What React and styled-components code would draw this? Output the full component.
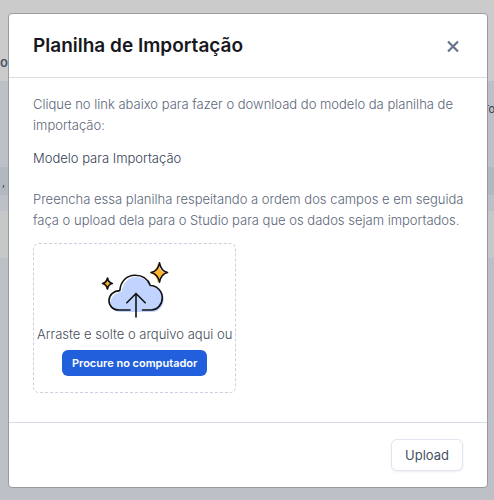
import React, { useRef } from "react";
import styled, { createGlobalStyle } from "styled-components";

const App = () => {
  const fileInput = useRef(null);

  const browseHandler = () => {
    fileInput.current.click();
  };

  return (
    <>
      <GlobalStyle />
      <Backdrop aria-hidden="true">
        <Band $height={81} $color="#cbcbcb">
          <strong>no</strong>
        </Band>
        <Band $height={86} $color="#bdc1c7" $align="flex-start" $end>
          <span>To</span>
        </Band>
        <Band $height={28} $color="#b2b8bf">
          <span>, s</span>
        </Band>
        <Band $height={16} $color="#bdc1c7" />
        <Band $height={47} $color="#c6c7c9" />
      </Backdrop>
      <Overlay>
        <Modal role="dialog" aria-labelledby="modal-title">
          <Header>
            <Title id="modal-title">Planilha de Importação</Title>
            <CloseButton type="button" aria-label="Fechar">
              <CloseIcon />
            </CloseButton>
          </Header>
          <Body>
            <Text>
              Clique no link abaixo para fazer o download do modelo da planilha
              de importação:
            </Text>
            <ModelLink href="#modelo">Modelo para Importação</ModelLink>
            <Text>
              Preencha essa planilha respeitando a ordem dos campos e em seguida
              faça o upload dela para o Studio para que os dados sejam
              importados.
            </Text>
            <DropZone>
              <CloudIcon />
              <DropLabel htmlFor="file">
                Arraste e solte o arquivo aqui ou
              </DropLabel>
              <input id="file" type="file" ref={fileInput} hidden />
              <BrowseButton type="button" onClick={browseHandler}>
                Procure no computador
              </BrowseButton>
            </DropZone>
          </Body>
          <Footer>
            <UploadButton type="button">Upload</UploadButton>
          </Footer>
        </Modal>
      </Overlay>
    </>
  );
};

const CloseIcon = () => (
  <svg width="12" height="12" viewBox="0 0 12 12" aria-hidden="true">
    <path
      d="M1 1.500 11 11.500M11 1.500 1 11.500"
      stroke="#64748b"
      strokeWidth="2.2"
      fill="none"
    />
  </svg>
);

const CloudIcon = () => (
  <svg width="68" height="60" viewBox="0 0 68 60" aria-hidden="true">
    {/* offset colour fills */}
    <path
      d="M19 52C13 52 9.500 48 9.500 42.500C9.500 37 14 32.500 20.500 32C22 23 27 17 35 17C42 17 47 21 50 27C57 27 62.800 32 62.800 39C62.800 46 58 52 51 52Z"
      fill="#c0d4ff"
    />
    <path
      d="M57 3Q58.500 11.500 65 13Q58.500 14.500 57 23Q55.500 14.500 49 13Q55.500 11.500 57 3Z"
      fill="#ffb42e"
    />
    <path
      d="M5.500 18Q6.500 23 10.500 24Q6.500 25 5.500 30Q4.500 25 1 24Q4.500 23 5.500 18Z"
      fill="#ffb42e"
    />
    <g
      fill="none"
      stroke="#111"
      strokeWidth="1.6"
      strokeLinecap="round"
      strokeLinejoin="round"
    >
      <path d="M29 50H18C12 50 8 46 8 40.500C8 35 12.500 30.800 18.800 30.600C19.500 21.500 25.500 15.200 34 15.200C41.500 15.200 47 19 49.300 25.500C56 25.800 61.300 31 61.300 37.800C61.300 44.500 56.500 50 50 50H41.500" />
      <path d="M35 57V33.500M25.800 42.800 35 33.500 44.200 42.800" />
      <path d="M58.500 2.800Q60 11 66.500 12.500Q60 14 58.500 22.200Q57 14 50 12.500Q57 11 58.500 2.800Z" />
      <path d="M6.500 18Q7.300 22.600 11.300 23.500Q7.300 24.400 6.500 29Q5.700 24.400 1.500 23.500Q5.700 22.600 6.500 18Z" />
    </g>
  </svg>
);

const GlobalStyle = createGlobalStyle`
  * {
    box-sizing: border-box;
  }
  body {
    margin: 0;
    background: #bdc1c7;
    font-family: Inter, "Liberation Sans", sans-serif;
    font-size: 13px;
    font-weight: 300;
    line-height: 21px;
  }
  button {
    font-family: inherit;
    cursor: pointer;
  }
`;

const Backdrop = styled.div`
  position: fixed;
  inset: 0;
  overflow: hidden;
  color: #475569;
`;
const Band = styled.div`
  display: flex;
  align-items: ${(props) => props.$align || "flex-end"};
  justify-content: ${(props) => (props.$end ? "flex-end" : "flex-start")};
  height: ${(props) => props.$height}px;
  background: ${(props) => props.$color};
  strong {
    margin: 0 0 8px -8px;
    font-weight: 600;
  }
  span {
    margin: ${(props) => (props.$end ? "18px -1px 0 0" : "0 0 2px 2px")};
    font-size: 11px;
    font-weight: 400;
    color: #3f3a4a;
  }
`;
const Overlay = styled.div`
  position: relative;
  padding: 13px 6px 12px 8px;
`;
const Modal = styled.div`
  width: 100%;
  background: #fff;
  border: 1px solid #999a9c;
  border-radius: 4px;
`;
const Header = styled.div`
  display: flex;
  align-items: center;
  justify-content: space-between;
  height: 64px;
  padding: 0 24px;
  border-bottom: 1px solid #dcdde0;
`;
const Title = styled.h2`
  margin: 0;
  font-size: 19px;
  line-height: 24px;
  font-weight: 600;
  color: #16181d;
`;
const CloseButton = styled.button`
  display: flex;
  padding: 4px;
  border: 0;
  background: none;
`;
const Body = styled.div`
  display: flex;
  flex-direction: column;
  align-items: flex-start;
  gap: 12px;
  padding: 16px 16px 29px 24px;
`;
const Text = styled.p`
  margin: 0;
  color: #5b6679;
`;
const ModelLink = styled.a`
  margin-bottom: 8px;
  color: #334155;
  text-decoration: none;
`;
const DropZone = styled.div`
  display: flex;
  flex-direction: column;
  align-items: center;
  padding: 16px 3px;
  border: 1px dashed #cbcfde;
  border-radius: 6px;
`;
const DropLabel = styled.label`
  margin: 4px 0 5px;
  color: #454d59;
`;
const BrowseButton = styled.button`
  height: 26px;
  padding: 0 10px;
  border: 0;
  border-radius: 6px;
  background: #225fdc;
  color: #fff;
  font-size: 11px;
  font-weight: 600;
`;
const Footer = styled.div`
  display: flex;
  justify-content: flex-end;
  padding: 16px 24px;
  border-top: 1px solid #d9dce6;
`;
const UploadButton = styled.button`
  height: 32px;
  padding: 0 13px;
  border: 1px solid #e2e5f0;
  border-radius: 6px;
  background: #fff;
  box-shadow: 0 1px 2px rgba(30, 41, 80, 0.08);
  color: #475164;
  font-size: 13px;
`;

export default App;
